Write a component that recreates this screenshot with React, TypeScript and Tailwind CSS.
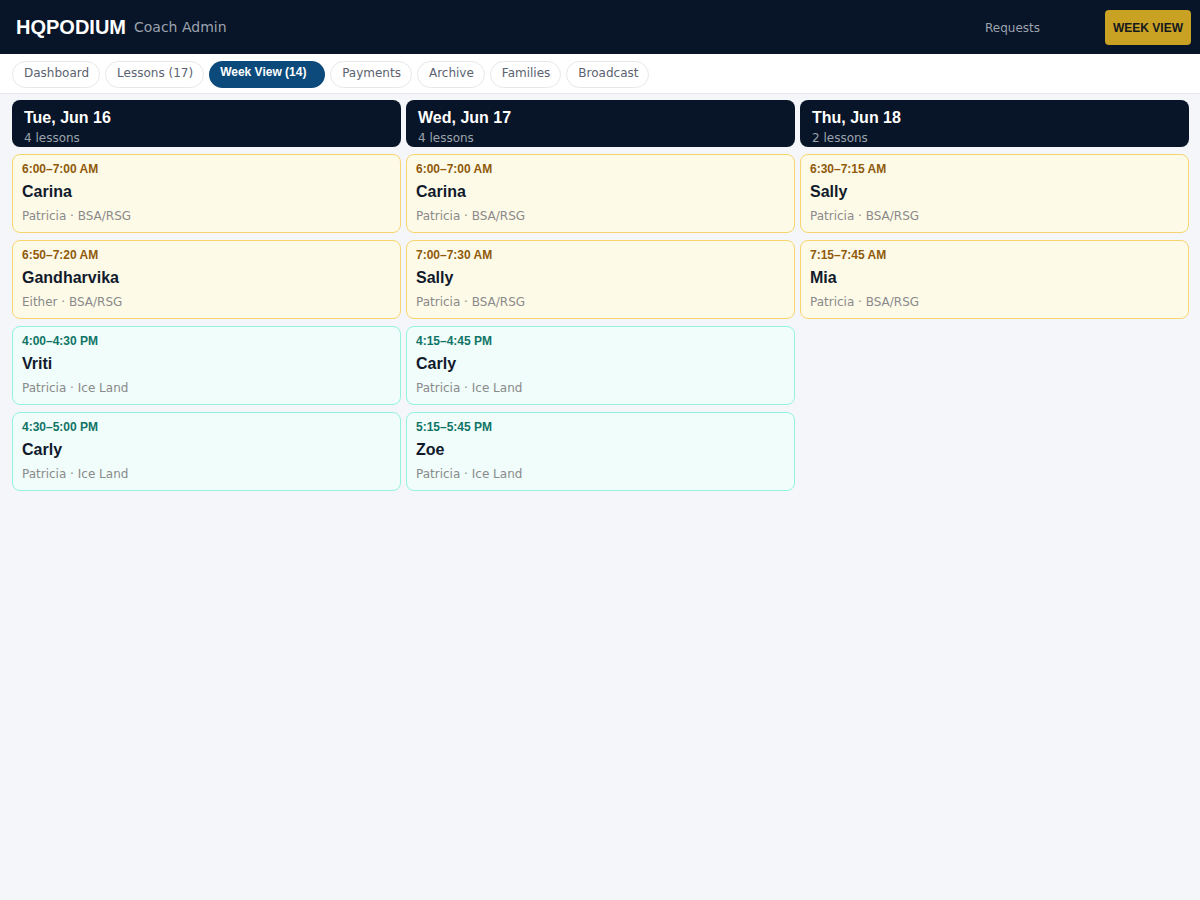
import React from "react";

type Lesson = { time: string; name: string; sub: string; kind: "am" | "pm" };
type Day = { title: string; count: string; lessons: Lesson[] };

const days: Day[] = [
  {
    title: "Tue, Jun 16",
    count: "4 lessons",
    lessons: [
      { time: "6:00–7:00 AM", name: "Carina", sub: "Patricia · BSA/RSG", kind: "am" },
      { time: "6:50–7:20 AM", name: "Gandharvika", sub: "Either · BSA/RSG", kind: "am" },
      { time: "4:00–4:30 PM", name: "Vriti", sub: "Patricia · Ice Land", kind: "pm" },
      { time: "4:30–5:00 PM", name: "Carly", sub: "Patricia · Ice Land", kind: "pm" },
    ],
  },
  {
    title: "Wed, Jun 17",
    count: "4 lessons",
    lessons: [
      { time: "6:00–7:00 AM", name: "Carina", sub: "Patricia · BSA/RSG", kind: "am" },
      { time: "7:00–7:30 AM", name: "Sally", sub: "Patricia · BSA/RSG", kind: "am" },
      { time: "4:15–4:45 PM", name: "Carly", sub: "Patricia · Ice Land", kind: "pm" },
      { time: "5:15–5:45 PM", name: "Zoe", sub: "Patricia · Ice Land", kind: "pm" },
    ],
  },
  {
    title: "Thu, Jun 18",
    count: "2 lessons",
    lessons: [
      { time: "6:30–7:15 AM", name: "Sally", sub: "Patricia · BSA/RSG", kind: "am" },
      { time: "7:15–7:45 AM", name: "Mia", sub: "Patricia · BSA/RSG", kind: "am" },
    ],
  },
];

const tabs = ["Dashboard", "Lessons (17)", "Week View (14)", "Payments", "Archive", "Families", "Broadcast"];

function Card({ l }: { l: Lesson }) {
  const am = l.kind === "am";
  return (
    <div
      className={
        am
          ? "rounded-[8px] border border-[#f7d56e] bg-[#fefae8] px-[9px] pt-[7px] pb-[8px]"
          : "rounded-[8px] border border-[#93f3df] bg-[#f0fdfb] px-[9px] pt-[7px] pb-[8px]"
      }
    >
      <div
        className={
          am
            ? "font-['Liberation_Sans',Arial,sans-serif] text-[12px] leading-[14px] font-bold text-[#8f5a0c]"
            : "font-['Liberation_Sans',Arial,sans-serif] text-[12px] leading-[14px] font-bold text-[#0f7466]"
        }
      >
        {l.time}
      </div>
      <div className="mt-[6px] font-['Liberation_Sans',Arial,sans-serif] text-[16px] leading-[20px] font-bold text-[#111a2c]">
        {l.name}
      </div>
      <div className="mt-[6px] font-['DejaVu_Sans',sans-serif] text-[12px] leading-[16px] text-[#8a8a8a]">
        {l.sub}
      </div>
    </div>
  );
}

export default function App() {
  return (
    <div className="min-h-[900px] w-full bg-[#f4f6fa]">
      <header className="flex h-[54px] items-center bg-[#081427] pl-[16px] pr-[9px]">
        <div className="font-['Liberation_Sans',Arial,sans-serif] text-[20px] font-bold leading-none text-white">
          HQPODIUM
        </div>
        <div className="ml-[8px] font-['DejaVu_Sans',sans-serif] text-[14px] text-[#9ba3ae]">
          Coach Admin
        </div>
        <div className="flex-1" />
        <div className="mt-[2px] font-['DejaVu_Sans',sans-serif] text-[12px] text-[#9ba3ae]">
          Requests
        </div>
        <div className="mt-[1px] ml-[65px] flex h-[35px] w-[86px] items-center justify-center rounded-[4px] bg-[#c9a123] font-['Liberation_Sans',Arial,sans-serif] text-[12px] font-bold text-[#14181f]">
          WEEK VIEW
        </div>
      </header>
      <nav className="flex h-[40px] items-start gap-[5px] border-b border-[#e5e7eb] bg-white px-[12px] pt-[7px]">
        {tabs.map((t) =>
          t.startsWith("Week") ? (
            <div
              key={t}
              className="h-[27px] w-[116px] rounded-full bg-[#0b4a7a] pl-[11px] pt-[4px] font-['Liberation_Sans',Arial,sans-serif] text-[12px] leading-[14px] font-bold text-white"
            >
              {t}
            </div>
          ) : (
            <div
              key={t}
              className="h-[27px] rounded-full border border-[#e5e7eb] bg-white pl-[11px] pr-[10px] pt-[4px] font-['DejaVu_Sans',sans-serif] text-[12px] leading-[15px] text-[#5b6270]"
            >
              {t}
            </div>
          )
        )}
      </nav>
      <main className="grid grid-cols-3 gap-[5px] pl-[12px] pr-[11px] pt-[6px]">
        {days.map((d) => (
          <div key={d.title} className="flex flex-col gap-[7px]">
            <div className="h-[47px] rounded-[8px] bg-[#081427] px-[12px] pt-[8px]">
              <div className="font-['Liberation_Sans',Arial,sans-serif] text-[16px] leading-[20px] font-bold text-white">
                {d.title}
              </div>
              <div className="mt-[2px] font-['DejaVu_Sans',sans-serif] text-[12px] leading-[16px] text-[#9ba3ae]">
                {d.count}
              </div>
            </div>
            {d.lessons.map((l, i) => (
              <Card key={i} l={l} />
            ))}
          </div>
        ))}
      </main>
    </div>
  );
}
